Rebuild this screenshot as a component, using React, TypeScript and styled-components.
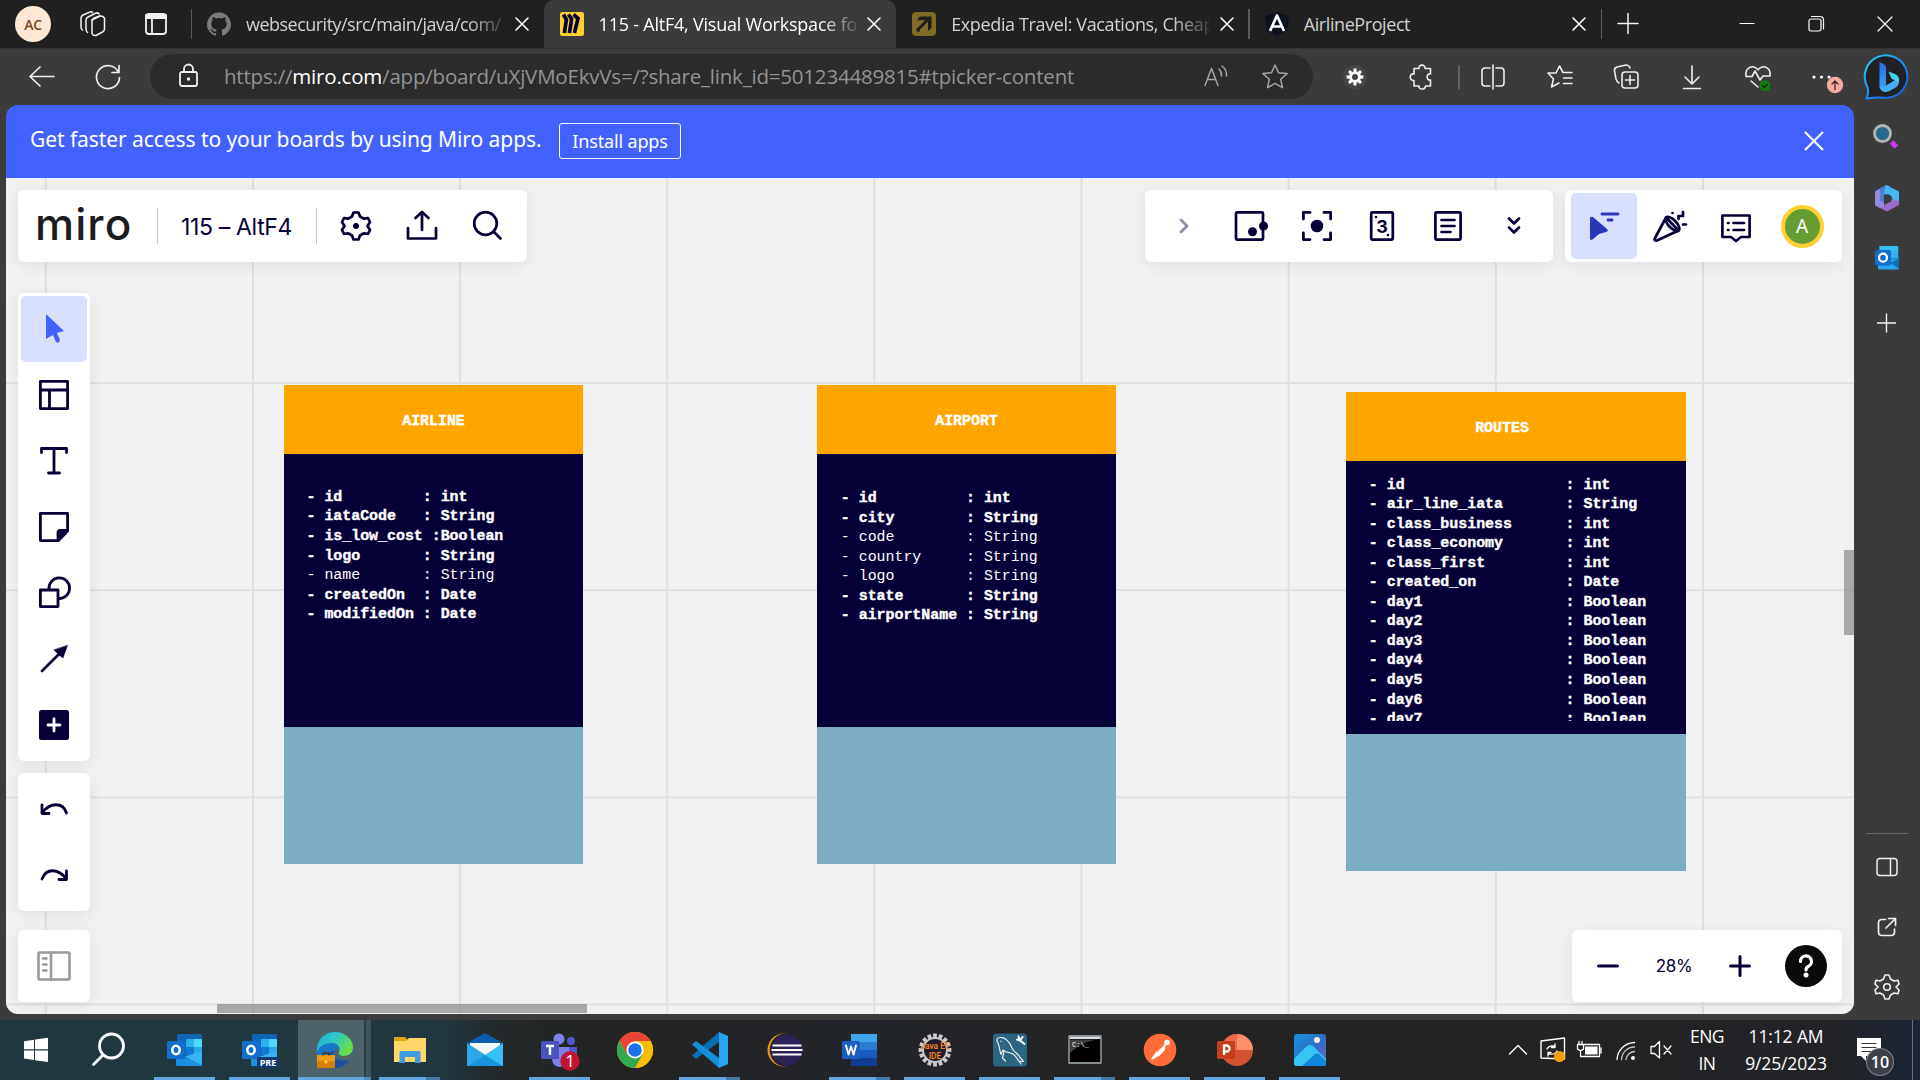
import React from "react";
import styled, { createGlobalStyle } from "styled-components";

const NAVY = "#050038";
const UI = '"Open Sans", "Noto Sans", sans-serif';

const GlobalStyle = createGlobalStyle`
  * { box-sizing: border-box; }
  body { margin: 0; background: #3b3b3b; font-family: ${UI}; overflow: hidden; }
`;

/* ---------- shared pieces ---------- */

const Svg = styled.svg<{ $size: number }>`
  display: block;
  flex: none;
  width: ${(p) => p.$size}px;
  height: ${(p) => p.$size}px;
  overflow: visible;
`;

/* Every icon is drawn around its own centre. */
function Icon({
  size = 36,
  color = "none",
  width = 1.5,
  children,
}: {
  size?: number;
  color?: string;
  width?: number;
  children: React.ReactNode;
}) {
  const h = size / 2;
  return (
    <Svg
      $size={size}
      viewBox={`${-h} ${-h} ${size} ${size}`}
      fill="none"
      stroke={color}
      strokeWidth={width}
      strokeLinecap="round"
      strokeLinejoin="round"
    >
      {children}
    </Svg>
  );
}

const Slot = styled.div<{ $w: number; $h?: number }>`
  flex: none;
  width: ${(p) => p.$w}px;
  height: ${(p) => (p.$h ? `${p.$h}px` : "100%")};
  display: flex;
  align-items: center;
  justify-content: center;
`;

function gearPath(teeth: number, outer: number, inner: number, a = 0.28, b = 0.5) {
  const step = (Math.PI * 2) / teeth;
  const pts: string[] = [];
  for (let i = 0; i < teeth; i++) {
    const c = i * step - Math.PI / 2;
    const at = (r: number, t: number) =>
      `${(Math.cos(c + t) * r).toFixed(2)} ${(Math.sin(c + t) * r).toFixed(2)}`;
    pts.push(at(inner, -step * b * 0.62), at(outer, -step * a * 0.6), at(outer, step * a * 0.6), at(inner, step * b * 0.62));
  }
  return `M${pts.join("L")}Z`;
}

/* ---------- browser frame ---------- */

const Screen = styled.div`
  width: 1920px;
  height: 1080px;
  display: grid;
  grid-template-columns: 1920px;
  grid-template-rows: 48px 57px 915px 60px;
  background: #3b3b3b;
  overflow: hidden;
`;

const TabStrip = styled.div`
  display: flex;
  align-items: center;
  background: #202020;
`;

const Profile = styled.div`
  width: 36px;
  height: 36px;
  border-radius: 50%;
  background: #fde9d6;
  color: #7a4a1c;
  font-size: 14px;
  font-weight: 600;
  letter-spacing: -0.4px;
  display: flex;
  align-items: center;
  justify-content: center;
`;

const Tab = styled.div<{ $active?: boolean }>`
  flex: none;
  width: 352.6px;
  height: 48px;
  display: flex;
  align-items: center;
  padding: 0 8px 0 16px;
  border-radius: 10px 10px 0 0;
  background: ${(p) => (p.$active ? "#3b3b3b" : "transparent")};
  color: ${(p) => (p.$active ? "#ffffff" : "#d2d2d2")};
`;

const TabTitle = styled.div<{ $ls?: number; $fade?: boolean; $bright?: boolean }>`
  flex: 1;
  min-width: 0;
  margin: 0 4px 1px 15px;
  overflow: hidden;
  white-space: nowrap;
  font-size: 18px;
  line-height: 26px;
  letter-spacing: ${(p) => p.$ls ?? 0}px;
  mask-image: ${(p) => (p.$fade ? "linear-gradient(90deg, #000 86%, rgba(0,0,0,.15) 100%)" : "none")};
`;

const Rule = styled.div<{ $h: number; $color: string; $m?: string }>`
  flex: none;
  width: 1.5px;
  height: ${(p) => p.$h}px;
  margin: ${(p) => p.$m ?? "0 -1px 0 -0.5px"};
  background: ${(p) => p.$color};
`;

const WindowButtons = styled.div`
  margin-left: auto;
  height: 100%;
  display: flex;
`;

const Toolbar = styled.div`
  display: flex;
  align-items: center;
  background: #3b3b3b;
  box-shadow: inset 0 1px 0 #333;
`;

const AddressBar = styled.div`
  flex: none;
  width: 1163px;
  height: 45px;
  border-radius: 23px;
  background: #2b2b2b;
  display: flex;
  align-items: center;
`;

const Url = styled.div`
  flex: 1;
  padding-bottom: 2px;
  color: #949494;
  font-size: 20.5px;
  letter-spacing: -0.2px;
  white-space: nowrap;
  b { color: #fff; font-weight: 400; }
`;

const Middle = styled.div`
  display: flex;
  padding: 0 0 6px 6px;
`;

const PageFrame = styled.main`
  width: 1848px;
  height: 909px;
  border-radius: 12px;
  overflow: hidden;
  display: flex;
  flex-direction: column;
`;

const SideRail = styled.aside`
  width: 66px;
  height: 915px;
  display: flex;
  flex-direction: column;
  align-items: center;
`;

const RailLine = styled.div`
  width: 42px;
  height: 1px;
  background: #6a6a6a;
`;

/* ---------- miro ---------- */

const Banner = styled.div`
  flex: none;
  height: 73px;
  display: flex;
  align-items: center;
  padding: 0 25px 1px 24px;
  background: #4262ff;
  color: #fff;
  font-family: "Noto Sans", sans-serif;
`;

const BannerText = styled.div`
  font-size: 21px;
  letter-spacing: -0.07px;
  white-space: nowrap;
  width: 529px;
  padding-bottom: 4px;
`;

const InstallButton = styled.button`
  width: 122px;
  height: 36px;
  padding: 0 0 1px;
  border: 1.5px solid #fff;
  border-radius: 3px;
  background: none;
  color: #fff;
  font: 18px "Noto Sans", sans-serif;
  letter-spacing: -0.15px;
`;

const BannerClose = styled.div`
  margin-left: auto;
  width: 29px;
`;

const Canvas = styled.div`
  flex: 1;
  position: relative;
  overflow: hidden;
  background-color: #f1f1f1;
  background-image: linear-gradient(90deg, #dfdfdf 1.5px, transparent 1.5px),
    linear-gradient(180deg, #dfdfdf 1.5px, transparent 1.5px);
  background-size: 207.15px 207.15px;
  background-position: 38.800px -3.100px;
`;

const Entity = styled.section<{ $x: number; $y: number; $w: number }>`
  position: absolute;
  left: ${(p) => p.$x}px;
  top: ${(p) => p.$y}px;
  width: ${(p) => p.$w}px;
  height: 479px;
  display: grid;
  grid-template-rows: 68.5px 273.5px 1fr;
  background: #7dadc3;
  color: #fff;
  font-family: "Liberation Mono", monospace;
  font-size: 14.92px;
  line-height: 19.55px;
`;

const EntityHead = styled.header<{ $shift?: number }>`
  background: #ffa500;
  text-align: center;
  font-weight: 700;
  -webkit-text-stroke: 0.4px #fff;
  padding: 27px ${(p) => p.$shift ?? 0}px 0 0;
`;

const EntityBody = styled.div<{ $top: number; $left: number }>`
  background: ${NAVY};
  padding: ${(p) => p.$top}px 0 13.5px ${(p) => p.$left}px;
  min-height: 0;
`;

const FieldList = styled.div`
  height: 100%;
  overflow: hidden;
`;

const Field = styled.div<{ $bold: boolean }>`
  white-space: pre;
  height: 19.55px;
  font-weight: ${(p) => (p.$bold ? 700 : 400)};
  -webkit-text-stroke: ${(p) => (p.$bold ? "0.4px #fff" : "0")};
`;

const Overlay = styled.div`
  position: absolute;
  inset: 0;
  padding: 12px;
  display: flex;
  flex-direction: column;
`;

const TopRow = styled.div`
  display: flex;
  gap: 12px;
  height: 72px;
`;

const Panel = styled.div<{ $w: number; $h?: number; $column?: boolean; $pad?: string }>`
  flex: none;
  width: ${(p) => p.$w}px;
  height: ${(p) => p.$h ?? 72}px;
  padding: ${(p) => p.$pad ?? "0"};
  display: flex;
  flex-direction: ${(p) => (p.$column ? "column" : "row")};
  align-items: center;
  border-radius: 6px;
  background: #fff;
  box-shadow: 0 4px 16px rgba(5, 0, 56, 0.07);
`;

const Spacer = styled.div`
  flex: 1;
`;

const Logo = styled.div`
  width: 122px;
  height: 72px;
  color: #1c1c1e;
  font: 500 44px/68px Inter, sans-serif;
  letter-spacing: 1.1px;
`;

const BoardName = styled.div`
  width: 158px;
  padding: 1px 0 0 23px;
  color: ${NAVY};
  font: 400 23px Inter, sans-serif;
  letter-spacing: -0.35px;
  white-space: nowrap;
`;

const ToolCell = styled.div<{ $active?: boolean; $w?: number }>`
  flex: none;
  width: ${(p) => p.$w ?? 66}px;
  height: 66px;
  display: flex;
  align-items: center;
  justify-content: center;
  border-radius: 5px;
  background: ${(p) => (p.$active ? "#d9dfff" : "transparent")};
`;

const Avatar = styled.div`
  width: 43px;
  height: 43px;
  border-radius: 50%;
  border: 4px solid #ffd02f;
  background: #659d33;
  color: #fff;
  font: 19px "Noto Sans", sans-serif;
  display: flex;
  align-items: center;
  justify-content: center;
`;

const LowerArea = styled.div`
  flex: 1;
  display: flex;
  justify-content: space-between;
  align-items: flex-end;
`;

const LeftDock = styled.div`
  display: flex;
  flex-direction: column;
`;

const DockGap = styled.div<{ $h: number }>`
  height: ${(p) => p.$h}px;
`;

const ZoomValue = styled.div`
  width: 66px;
  text-align: center;
  color: ${NAVY};
  font: 17px Inter, sans-serif;
  letter-spacing: -0.4px;
`;

const ScrollThumb = styled.div<{ $vertical?: boolean }>`
  position: absolute;
  background: rgba(120, 120, 120, 0.6);
  ${(p) =>
    p.$vertical
      ? "right: 0; top: 372px; width: 10px; height: 85px;"
      : "left: 211px; bottom: 1px; width: 370px; height: 9px;"}
`;

/* ---------- taskbar ---------- */

const Taskbar = styled.footer`
  display: flex;
  height: 60px;
  background: linear-gradient(90deg, #20373f 0, #20373f 440px, #232829 500px, #232323 620px, #22252a 860px, #232323 1100px, #222326 1830px, #1b2436 1920px);
`;

const TaskItem = styled.div<{ $bar?: "single" | "stack"; $active?: boolean }>`
  flex: none;
  width: 75.02px;
  height: 60px;
  padding: 0 6px;
  display: flex;
  flex-direction: column;
  align-items: center;
  justify-content: space-between;
  &::after {
    content: "";
    width: ${(p) => (p.$active ? 73 : 61)}px;
    height: 3px;
    background: ${(p) =>
      p.$active
        ? "linear-gradient(90deg,#64a5de 66px,#5288b4 66px)"
        : p.$bar === "stack"
        ? "linear-gradient(90deg,#64a5de 47px,#477aa5 47px)"
        : p.$bar
        ? "#64a5de"
        : "transparent"};
  }
  ${(p) =>
    p.$active &&
    "padding: 0 1px; background: linear-gradient(90deg, transparent 1.5px, #4d6269 1.5px, #4d6269 67px, #2a4048 67px, #2a4048 69px, #40545b 69px, #40545b 74px, transparent 74px);"}
`;

const TaskIcon = styled.div`
  height: 57px;
  padding-top: 3px;
  display: flex;
  align-items: center;
`;

const Tray = styled.div`
  margin-left: auto;
  display: flex;
  height: 60px;
  color: #fff;
`;

const TrayText = styled.div<{ $w: number; $ls?: number }>`
  width: ${(p) => p.$w}px;
  text-align: center;
  font-size: 17.5px;
  line-height: 27.5px;
  letter-spacing: ${(p) => p.$ls ?? 0}px;
  padding-top: 2.5px;
  white-space: nowrap;
`;

const ShowDesktop = styled.div`
  width: 8px;
  height: 60px;
  border-left: 1.5px solid #6c7078;
`;

/* ---------- icons ---------- */

const X = ({ r = 6, w = 1.6 }: { r?: number; w?: number }) => (
  <Icon size={28} color="#fff" width={w}>
    <path d={`M${-r} ${-r}L${r} ${r}M${r} ${-r}L${-r} ${r}`} />
  </Icon>
);

const GitHubMark = () => (
  <Icon size={24}>
    <path
      transform="translate(-12 -12)"
      fill="#7b7b7b"
      d="M12 .3a12 12 0 0 0-3.8 23.4c.6.1.8-.3.8-.6v-2c-3.3.7-4-1.6-4-1.6-.6-1.4-1.4-1.8-1.4-1.8-1-.7.1-.7.1-.7 1.2 0 1.9 1.2 1.9 1.2 1 1.8 2.8 1.3 3.5 1 0-.8.4-1.3.7-1.6-2.7-.3-5.5-1.3-5.5-6 0-1.2.5-2.3 1.3-3.1-.2-.4-.6-1.6 0-3.2 0 0 1-.3 3.4 1.2a11.5 11.5 0 0 1 6 0c2.3-1.5 3.3-1.2 3.3-1.2.6 1.6.2 2.8 0 3.2.9.8 1.3 1.9 1.3 3.2 0 4.6-2.8 5.6-5.5 5.9.5.4.9 1 .9 2.2v3.3c0 .3.1.7.8.6A12 12 0 0 0 12 .3"
    />
  </Icon>
);

const MiroMark = () => (
  <Icon size={24}>
    <rect x="-12" y="-12" width="24" height="24" rx="2.5" fill="#ffd02f" />
    <g stroke={NAVY} strokeWidth="3.7" strokeLinecap="butt" strokeLinejoin="miter">
      <path d="M-8.500 -9.500L-5.600 -4.500L-7.600 9" />
      <path d="M-3.500 -9.500L-.4 -5L-2.600 9" />
      <path d="M1.500 -9.500L6 -5.500L2.400 9" />
    </g>
  </Icon>
);

const ExpediaMark = () => (
  <Icon size={24}>
    <rect x="-12" y="-12" width="24" height="24" rx="4" fill="#7f6d26" />
    <path d="M-5.5 5L5 -5.5" stroke="#1d1d22" strokeWidth="3" />
    <path d="M-4 -7.5H7.5V4L4 7V-3.8H-7Z" fill="#1d1d22" />
    <path d="M-7.5 4h3.5v3.5h-3.500z" fill="#1d1d22" />
  </Icon>
);

const AngularMark = () => (
  <Icon size={24}>
    <path d="M0 -12L12 -8L10 7L0 12L-10 7L-12 -8Z" fill="#0b1220" />
    <path d="M-7 7L0 -8.500L7 7M-3.800 2.500H3.800" stroke="#fff" strokeWidth="2.700" strokeLinecap="butt" />
  </Icon>
);

const BingMark = () => (
  <Icon size={48}>
    <defs>
      <linearGradient id="bingRing" x1="0" y1="0" x2="1" y2="1">
        <stop offset="0" stopColor="#27d3f5" />
        <stop offset=".6" stopColor="#1d86f0" />
        <stop offset="1" stopColor="#1b52e0" />
      </linearGradient>
      <linearGradient id="bingStem" x1="0" y1="0" x2="0" y2="1">
        <stop offset="0" stopColor="#2f62e8" />
        <stop offset="1" stopColor="#37a7fa" />
      </linearGradient>
    </defs>
    <path
      d="M-20.500 21.500C-18.500 17 -18.500 14 -19.500 10A21.300 21.300 0 1 1 .5 20.800C-6 20.500 -12 20 -20.500 21.500Z"
      fill="#202124"
      stroke="url(#bingRing)"
      strokeWidth="2"
    />
    <path d="M-7.500 -15L-2.500 -12.500Q-1 -11.500 -1 -10V8L-4.500 12.500L-7.500 9Z" fill="url(#bingStem)" />
    <path d="M-7.500 8C-7 11 -3 10 -1 8.500L11.500 1C13 5 11.500 9 8 11L2 14.300C-3 16.500 -8 13.500 -7.500 8Z" fill="#45aefa" />
    <path d="M1.500 -5.500L8 -3C11.500 -1.500 12.500 2 12 5L7 3L4.500 1.500Z" fill="#41d6ea" />
  </Icon>
);

const OutlookMark = ({ pre }: { pre?: boolean }) => (
  <Icon size={36}>
    <rect x="-8" y="-16" width="25" height="26" rx="1.500" fill="#1066b5" />
    <path d="M1 -11H9V-3H1Z" fill="#2eb0ee" />
    <path d="M9 -11H17V-3H9Z" fill="#50d9ff" />
    <path d="M1 -3H9V5H1Z" fill="#0f78d4" />
    <path d="M9 -3H17V5H9Z" fill="#28a8ea" />
    <path d="M-9 2L4 9L17 1V14.500Q17 16 15.500 16H-7.500Q-9 16 -9 14.500Z" fill="#1b8fe0" />
    <path d="M17 1V15L0 6.500Z" fill="#36b3f3" />
    <rect x="-18" y="-9" width="18" height="18" rx="1.500" fill="#0f6fcb" />
    <ellipse cx="-9" cy="0" rx="3.700" ry="4.200" stroke="#fff" strokeWidth="2.500" />
    {pre && (
      <>
        <rect x="-3" y="7" width="22" height="11" rx="1" fill="#123b6d" />
        <text x="8" y="15.800" fill="#fff" fontSize="9" fontWeight="700" textAnchor="middle" fontFamily="Open Sans">
          PRE
        </text>
      </>
    )}
  </Icon>
);

const RailOutlook = () => (
  <Icon size={26}>
    <rect x="-7.500" y="-12" width="19" height="20" rx="1.200" fill="#1b86cf" />
    <path d="M-7.500 -12H11V-7H-7.500Z" fill="#37bdf0" />
    <path d="M3 -7H11V0H3Z" fill="#35b0ec" />
    <path d="M-9 6L3 2L12 0V10.500Q12 11.500 11 11.500H-8Q-9 11.500 -9 10.500Z" fill="#28a8ea" />
    <path d="M12 0V11L3 5Z" fill="#1272b5" />
    <rect x="-12" y="-8" width="16" height="15.500" rx="1.500" fill="#0f6fcb" />
    <circle cx="-4" cy="-.300" r="4" stroke="#fff" strokeWidth="2.200" />
  </Icon>
);

const EdgeMark = () => (
  <Icon size={38}>
    <defs>
      <linearGradient id="edgeTop" x1="0" y1="0" x2="1" y2=".5">
        <stop offset="0" stopColor="#22a7e0" />
        <stop offset=".5" stopColor="#2fc8c8" />
        <stop offset="1" stopColor="#6ae044" />
      </linearGradient>
    </defs>
    <circle r="18" fill="#1479c8" />
    <path d="M-18 -2C-17 -12 -9 -18 0 -18C11 -18 18 -10 18 -3C18 3 14 6 9 6C5 6 3 4 4 2C6 -2 3 -7 -3 -7C-10 -7 -16 -4 -18 2Z" fill="url(#edgeTop)" />
    <path d="M-1 0C-3 8 4 13 15 9C12 15 6 18 0 18C-6 17 -9 9 -6 3Z" fill="#1b4f9c" />
    <path d="M4 2C2.500 4 4.500 6 9 6Q14 6 17.500 2.500L18.500 8L15 10C6 12 0 8 -1 2C0 -2 4 -3 4 2Z" fill="#4f636b" />
    <rect x="-18" y="5" width="18" height="13" rx="1" fill="#d57f08" />
    <rect x="-18" y="5" width="18" height="6" fill="#f09c12" />
    <path d="M-12 5V3H-6V5" stroke="#5c3200" strokeWidth="1.500" />
    <circle cx="-9" cy="12" r="1.500" fill="#ffe04b" />
  </Icon>
);

const FolderMark = () => (
  <Icon size={36}>
    <path d="M-16 -13H-5L-2 -10H16V12H-16Z" fill="#e0a30c" />
    <path d="M-16 -9H-4L-1 -12H16V12H-16Z" fill="#ffd768" />
    <path d="M-10.500 13V3Q-10.500 1 -8.500 1H8.500Q10.500 1 10.500 3V13H5V7H-5V13Z" fill="#3f9ce0" />
  </Icon>
);

const MailMark = () => (
  <Icon size={38}>
    <path d="M-18 -7L0 -17L18 -7V4H-18Z" fill="#0a5eb0" />
    <path d="M-15 -7H15V4L0 10L-15 4Z" fill="#f2f4f8" />
    <path d="M-18 -7L2 6L18 16H-18Z" fill="#2ea6e8" />
    <path d="M18 -7V16H14L-18 16L0 5Z" fill="#35c1f5" />
    <path d="M-18 16L0 5L18 16Z" fill="#1c93dd" />
  </Icon>
);

const TeamsMark = () => (
  <Icon size={40}>
    <circle cx="-1" cy="-11" r="5.500" fill="#7b83eb" />
    <circle cx="11" cy="-9" r="4" fill="#5059c9" />
    <path d="M4 -3H17V6Q16 12 9 12H4Z" fill="#5059c9" />
    <path d="M-8 -3H9V8Q7 17 -1 17Q-8 16 -8 8Z" fill="#7b83eb" />
    <rect x="-19" y="-9" width="18" height="18" rx="1.500" fill="#4b53bc" />
    <path d="M-14 -4H-6M-10 -4V5" stroke="#fff" strokeWidth="2.400" strokeLinecap="butt" />
    <circle cx="10" cy="11" r="9.700" fill="#c4122f" />
    <text x="10" y="17" fill="#fff" fontSize="17" textAnchor="middle" fontFamily="Open Sans">
      1
    </text>
  </Icon>
);

const ChromeMark = () => (
  <Icon size={36}>
    <circle r="18" fill="#fbbc05" />
    <path d="M-15.600 -9A18 18 0 0 1 15.600 -9H0L-7.800 4.500Z" fill="#ea4335" />
    <path d="M-15.600 -9A18 18 0 0 0 0 18L7.800 4.500H-7.800Z" fill="#34a853" />
    <path d="M15.600 -9A18 18 0 0 1 0 18L7.800 4.500L0 -9Z" fill="#fbbc05" />
    <circle r="8.500" fill="#fff" />
    <circle r="6.800" fill="#1a73e8" />
  </Icon>
);

const CodeMark = () => (
  <Icon size={36}>
    <path d="M-18 5.500L-14 9L9 -8V-18L-18 5.500Z" fill="#0a6fb2" />
    <path d="M-18 -5.500L-14 -9L9 8V18L-18 -5.500Z" fill="#1590d8" />
    <path d="M9 -18L18 -14V14L9 18Z" fill="#27a5f2" />
  </Icon>
);

const EclipseMark = () => (
  <Icon size={36}>
    <circle cx="-1" r="16.500" fill="#f7941e" />
    <circle cx="1.500" r="16.800" fill="#222" />
    <circle cx="2" r="15.700" fill="#2c2255" />
    <path d="M-12.500 -4.500H16.500M-13.500 0H17.500M-12.500 4.500H16.500" stroke="#fff" strokeWidth="2" strokeLinecap="butt" />
  </Icon>
);

const WordMark = () => (
  <Icon size={36}>
    <path d="M-9 -16H17V-8H-9Z" fill="#41a5ee" />
    <path d="M-9 -8H17V0H-9Z" fill="#2b7cd3" />
    <path d="M-9 0H17V8H-9Z" fill="#185abd" />
    <path d="M-9 8H17V16H-9Z" fill="#103f91" />
    <rect x="-18" y="-9" width="18" height="18" rx="1.500" fill="#1d5ec4" />
    <path d="M-14 -4.500L-11.500 4.500L-9 -3.500L-6.500 4.500L-4 -4.500" stroke="#fff" strokeWidth="1.900" />
  </Icon>
);

const JavaMark = () => (
  <Icon size={36}>
    <path d={gearPath(16, 16.500, 12.800, 0.5, 0.6)} fill="#c9c9cb" />
    <circle r="11" fill="#231c2b" />
    <g fill="#f08726" fontSize="8.400" fontWeight="600" textAnchor="middle" fontFamily="Roboto" letterSpacing="0">
      <text y="-1.500">Java EE</text>
      <text y="8.500">IDE</text>
    </g>
  </Icon>
);

const MySqlMark = () => (
  <Icon size={36}>
    <rect x="-17" y="-16.500" width="34" height="33" rx="3.500" fill="#2a6584" />
    <g stroke="#eaf2f6" strokeWidth="1.200">
      <path d="M-9 4C-11 0 -10 -3 -12 -7C-14 -10 -13 -12.500 -10 -12.500C-5 -13 0 -8 2.500 -1C5 3 9 4 10.500 8L13.500 11.500H9.500L11 14" />
      <path d="M-9 4L-7 0C-4 3 0 2 3 4C6 6 7 9 9.500 11.500" />
      <path d="M-6 1.500L-7.500 8L-4.500 11" />
      <path d="M-9 -9V-8.500" />
    </g>
    <path d="M8.500 -13.500L10 -9.500L14.500 -6M7 -10.500L10 -9.500L12.500 -13" stroke="#fff" strokeWidth="2" />
  </Icon>
);

const CmdMark = () => (
  <Icon size={36}>
    <rect x="-16" y="-14" width="32" height="27" fill="#000" stroke="#a9b2b8" strokeWidth="1.300" />
    <path d="M-15.300 -13.300H15.300V-11H-15.300Z" fill="#d9dde2" />
    <path d="M-15 -10.500H15C0 -10 -8 -3 -15 3Z" fill="#3f3f3f" />
    <text x="-13" y="-3.500" fill="#fff" fontSize="7" fontFamily="Liberation Mono">
      C:\_
    </text>
  </Icon>
);

const PostmanMark = () => (
  <Icon size={36}>
    <circle r="16.300" fill="#ff6c37" />
    <circle cx="7" cy="-7.500" r="2.800" fill="#fff" />
    <path d="M5 -5L-3 2L-8 9L-1 5L4 0Z" fill="#fff" stroke="#fff" strokeWidth="1.500" />
    <path d="M-3 2L3 -4" stroke="#ff6c37" strokeWidth=".8" />
  </Icon>
);

const PptMark = () => (
  <Icon size={36}>
    <circle cx="2" r="16" fill="#d35230" />
    <path d="M2 -16A16 16 0 0 1 18 0H2Z" fill="#ff8f6b" />
    <path d="M2 -16A16 16 0 0 0 -14 0H2Z" fill="#ed6c47" />
    <rect x="-18" y="-9" width="18" height="18" rx="1.500" fill="#c43e1c" />
    <path d="M-11 5V-4.500H-8.500A3 3 0 0 1 -8.500 1.500H-11" stroke="#fff" strokeWidth="2.300" strokeLinecap="butt" />
  </Icon>
);

const PhotosMark = () => (
  <Icon size={36}>
    <defs>
      <linearGradient id="photoBg" x1="0" y1="0" x2="1" y2="1">
        <stop offset="0" stopColor="#1592e0" />
        <stop offset=".55" stopColor="#2f6fc4" />
        <stop offset="1" stopColor="#7d5fc0" />
      </linearGradient>
    </defs>
    <rect x="-16" y="-16" width="32" height="32" rx="3" fill="url(#photoBg)" />
    <path d="M-16 9L-3 -4Q0 -6 3 -4L16 9V13Q16 16 13 16H-13Q-16 16 -16 13Z" fill="#35c5f2" />
    <path d="M-8 16L5 4Q7 3 9 4L16 11V13Q16 16 13 16Z" fill="#0f86d8" />
    <circle cx="7" cy="-10" r="3" fill="#f4e8e2" />
  </Icon>
);

const SidePanelGlyph = () => (
  <Icon color="#eee">
    <rect x="-10" y="-8.500" width="20" height="17" rx="3" />
    <path d="M3.500 -8.500V8.500" />
  </Icon>
);

/* ---------- data ---------- */

type Row = [string, string, boolean];

const pad = (s: string, n: number) => s + " ".repeat(Math.max(0, n - s.length));

const airline: Row[] = [
  ["- id         : ", "int", true],
  ["- iataCode   : ", "String", true],
  ["- is_low_cost :", "Boolean", true],
  ["- logo       : ", "String", true],
  ["- name       : ", "String", false],
  ["- createdOn  : ", "Date", true],
  ["- modifiedOn : ", "Date", true],
];

const airport: Row[] = (
  [
    ["id", "int", true],
    ["city", "String", true],
    ["code", "String", false],
    ["country", "String", false],
    ["logo", "String", false],
    ["state", "String", true],
    ["airportName", "String", true],
  ] as Row[]
).map(([n, t, b]) => [pad(`- ${n}`, 14) + ": ", t, b]);

const routes: Row[] = (
  [
    ["id", "int"],
    ["air_line_iata", "String"],
    ["class_business", "int"],
    ["class_economy", "int"],
    ["class_first", "int"],
    ["created_on", "Date"],
    ["day1", "Boolean"],
    ["day2", "Boolean"],
    ["day3", "Boolean"],
    ["day4", "Boolean"],
    ["day5", "Boolean"],
    ["day6", "Boolean"],
    ["day7", "Boolean"],
  ] as [string, string][]
).map(([n, t]) => [pad(`- ${n}`, 22) + ": ", t, true]);

function EntityCard(props: {
  title: string;
  rows: Row[];
  x: number;
  y: number;
  w: number;
  top: number;
  left: number;
  shift?: number;
}) {
  return (
    <Entity $x={props.x} $y={props.y} $w={props.w}>
      <EntityHead $shift={props.shift}>{props.title}</EntityHead>
      <EntityBody $top={props.top} $left={props.left}>
        <FieldList>
          {props.rows.map(([a, b, bold]) => (
            <Field key={a} $bold={bold}>
              {a + b}
            </Field>
          ))}
        </FieldList>
      </EntityBody>
      <div />
    </Entity>
  );
}

/* ---------- sections ---------- */

const Tabs = () => (
  <TabStrip>
    <Slot $w={66}>
      <Profile>AC</Profile>
    </Slot>
    <Slot $w={54}>
      <Icon color="#f2f2f2">
        <path d="M-1 -4L7 -8Q9.500 -8.500 11.500 -6V5Q11.500 7 9.500 8L3 11.500Q0 12 -1 9.500Z" />
        <path d="M-1 -4Q-.5 -5 1 -6L7 -8" />
        <path d="M-5.500 8.500Q-7 7.500 -7 5V-4Q-7 -6 -5 -7L3 -11Q5 -11.500 6 -10M-10.500 6Q-12 5 -12 3V-6Q-12 -8 -10 -9L-3 -12Q-1.500 -12.500 -.5 -11.500" />
      </Icon>
    </Slot>
    <Slot $w={71}>
      <Icon color="#f2f2f2" width={1.8}>
        <rect x="-10" y="-10" width="20" height="20" rx="3" />
        <path d="M-10 -9H10V-6H-10Z" fill="#f2f2f2" />
        <path d="M-4 -5V10" />
      </Icon>
    </Slot>
    <Rule $h={30} $color="#5c5c5c" />
    <Tab>
      <GitHubMark />
      <TabTitle $fade $ls={-0.52}>websecurity/src/main/java/com/</TabTitle>
      <X />
    </Tab>
    <Tab $active>
      <MiroMark />
      <TabTitle $fade $ls={-0.22}>115 - AltF4, Visual Workspace for</TabTitle>
      <X />
    </Tab>
    <Tab>
      <ExpediaMark />
      <TabTitle $fade $ls={-0.37}>Expedia Travel: Vacations, Cheap</TabTitle>
      <X />
    </Tab>
    <Rule $h={30} $color="#5c5c5c" />
    <Tab>
      <AngularMark />
      <TabTitle $ls={-0.42}>AirlineProject</TabTitle>
      <X />
    </Tab>
    <Rule $h={30} $color="#5c5c5c" />
    <Slot $w={54}>
      <Icon color="#f2f2f2">
        <path d="M-10 -.5H10M0 -10.500V9.500" />
      </Icon>
    </Slot>
    <WindowButtons>
      <Slot $w={68}>
        <Icon color="#fff" width={1.2}>
          <path d="M-7 -.5H7" />
        </Icon>
      </Slot>
      <Slot $w={69}>
        <Icon color="#fff" width={1.2}>
          <rect x="-7" y="-5" width="12" height="12" rx="2" />
          <path d="M-4.500 -7.500H4Q7.500 -7.500 7.500 -4V5" />
        </Icon>
      </Slot>
      <Slot $w={70}>
        <X r={7} w={1.2} />
      </Slot>
    </WindowButtons>
  </TabStrip>
);

const BrowserBar = () => (
  <Toolbar>
    <Slot $w={84}>
      <Icon color="#eee" width={1.7}>
        <path d="M12 -.5H-12M-2 -10L-12 -.5L-2 9" />
      </Icon>
    </Slot>
    <Slot $w={48}>
      <Icon color="#eee" width={1.7}>
        <path d="M10.300 -5A11.500 11.500 0 1 0 11.500 .5M11 -11.500V-4.500H4" />
      </Icon>
    </Slot>
    <Slot $w={18} />
    <AddressBar>
      <Slot $w={74}>
        <Icon color="#eee" width={1.8}>
          <rect x="-7" y="-5" width="17" height="14" rx="2" />
          <path d="M-3 -5V-8A4.500 4.500 0 0 1 6 -8V-5" />
          <circle cx="1.500" cy="2" r=".8" fill="#eee" />
        </Icon>
      </Slot>
      <Url>
        https://<b>miro.com</b>/app/board/uXjVMoEkvVs=/?share_link_id=501234489815#tpicker-content
      </Url>
      <Slot $w={42}>
        <Icon color="#a5a5a5" width={1.5}>
          <path d="M-11 8.500L-4.500 -8.500L2 8.500M-8.700 2.500H-.3M3 -8Q6 -5 5.500 -1M6 -11Q11 -7 10.500 -1" />
        </Icon>
      </Slot>
      <Slot $w={76}>
        <Icon color="#a5a5a5" width={1.5}>
          <path d="M0 -12L3.500 -4.200L12 -3.400L5.700 2.300L7.500 10.700L0 6.400L-7.500 10.700L-5.700 2.300L-12 -3.400L-3.500 -4.200Z" />
        </Icon>
      </Slot>
    </AddressBar>
    <Slot $w={9} />
    <Slot $w={66}>
      <Icon>
        <circle r="12" fill="#464646" />
        <path d={gearPath(8, 8.500, 5.800, 0.35, 0.6)} fill="#fff" />
        <circle r="3" fill="#464646" />
      </Icon>
    </Slot>
    <Slot $w={68}>
      <Icon color="#eee" width={1.6}>
        <path d="M-8 -8.500H-3C-4 -13 4 -13 3 -8.500H8.500V-3C4 -4 4 4 8.500 3V9H3.500C4 13 -4 13 -3 9H-8V3.500C-13 4 -13 -4 -8 -3Z" />
      </Icon>
    </Slot>
    <Rule $h={24} $color="#626262" $m="0 0 0 2px" />
    <Slot $w={67}>
      <Icon color="#eee" width={1.6}>
        <path d="M-3 -9H-8Q-11 -9 -11 -6V6Q-11 9 -8 9H-3M3 -9H8Q11 -9 11 -6V6Q11 9 8 9H3M0 -12V12" />
      </Icon>
    </Slot>
    <Slot $w={66}>
      <Icon color="#eee" width={1.6}>
        <path d="M3 -4.500L-.5 -11L-4 -4H-12L-6.500 2L-8.500 10L-1 6M3.500 -4.500H12M3.500 1H12M3.500 6.500H12" />
      </Icon>
    </Slot>
    <Slot $w={66}>
      <Icon color="#eee" width={1.6}>
        <rect x="-4" y="-5" width="16" height="16" rx="3" />
        <path d="M4 -1.500V7.500M-.5 3H8.500M-7 6Q-9 5 -10 2L-11.500 -6Q-12 -9 -9 -10L0 -12Q3 -12 4 -9" />
      </Icon>
    </Slot>
    <Slot $w={66}>
      <Icon color="#eee" width={1.6}>
        <path d="M0 -11V6M-7 0L0 7L7 0M-8.500 11.500H8.500" />
      </Icon>
    </Slot>
    <Slot $w={66}>
      <Icon color="#eee" width={1.6}>
        <path d="M-12 -1C-13 -8 -8 -11 -4 -10Q-1 -9 0 -7Q1 -9 4 -10C8 -11 13 -8 12 -1M-12 -.5H-6L-3 -6L2 3L5 -1H12M-7 4L0 10" />
        <circle cx="7" cy="8.500" r="5.500" fill="#107c10" stroke="none" />
        <path d="M4.500 8.500L6.500 10.500L9.500 7" strokeWidth="1.200" stroke="#0a2a0a" />
      </Icon>
    </Slot>
    <Slot $w={63.5}>
      <Icon>
        <g fill="#fff">
          <circle cx="-8" cy="0" r="1.600" />
          <circle cx="-.5" cy="0" r="1.600" />
          <circle cx="7" cy="0" r="1.600" />
        </g>
        <circle cx="13" cy="8" r="8.200" fill="#f4aba3" />
        <path d="M13 12.500V4M10 7L13 4L16 7" stroke="#402020" strokeWidth="1.300" />
      </Icon>
    </Slot>
    <Slot $w={65}>
      <BingMark />
    </Slot>
  </Toolbar>
);

const LeftTools = () => (
  <LeftDock>
    <Panel $w={72} $h={468} $column $pad="3px 0">
      <ToolCell $active>
        <Icon>
          <path d="M-8 -15L10 2L3 4L6 11Q5 15 2 13L-1 6L-8 10Z" fill="#4262ff" />
        </Icon>
      </ToolCell>
      <ToolCell>
        <Icon color={NAVY} width={2.8}>
          <path d="M-13.600 -13.600H13.600V13.600H-13.600ZM-13.600 -5H13.600M-4.500 -5V13.600" />
        </Icon>
      </ToolCell>
      <ToolCell>
        <Icon color={NAVY} width={2.8}>
          <path d="M-12.500 -8.500V-12.500H12.500V-8.500M0 -12.500V12M-5.500 12H5.500" />
        </Icon>
      </ToolCell>
      <ToolCell>
        <Icon color={NAVY} width={2.8}>
          <path d="M-13.600 -13.600H13.600V4L4.500 13.600H-13.600Z" />
          <path d="M4 13V6Q4 3.500 6 3.500H13Z" fill={NAVY} />
        </Icon>
      </ToolCell>
      <ToolCell>
        <Icon color={NAVY} width={2.8}>
          <path d="M-13.600 -3H4V13.600H-13.600Z" />
          <path d="M-5 -4A10.300 10.300 0 1 1 5 5.500" />
        </Icon>
      </ToolCell>
      <ToolCell>
        <Icon color={NAVY} width={2.800}>
          <path d="M-12 12L5 -5" />
          <path d="M13.500 -13.500L9 -1L5.500 -3.500L3.500 -5.500L0 -9Z" fill={NAVY} strokeWidth=".5" />
        </Icon>
      </ToolCell>
      <ToolCell>
        <Icon>
          <rect x="-15" y="-15" width="30" height="30" rx="2.500" fill={NAVY} />
          <path d="M-6 0H6M0 -6V6" stroke="#fff" strokeWidth="2.800" />
        </Icon>
      </ToolCell>
    </Panel>
    <DockGap $h={12} />
    <Panel $w={72} $h={138} $column $pad="3px 0">
      <ToolCell>
        <Icon color={NAVY} width={2.800}>
          <path d="M-12 -4V4.500H-5M-12 4C-4 -7 9 -7 12.500 4" />
        </Icon>
      </ToolCell>
      <ToolCell>
        <Icon color={NAVY} width={2.800}>
          <path d="M12.500 -4V4.500H5M12.500 4C4 -7 -8 -7 -12 4" />
        </Icon>
      </ToolCell>
    </Panel>
    <DockGap $h={19} />
    <Panel $w={72} $pad="0 3px">
      <ToolCell>
        <Icon color="#999" width={2.600}>
          <rect x="-15.500" y="-13.500" width="31" height="27" rx="1" />
          <path d="M-3 -13.500V13.500M-11 -7.500H-7.500M-11 -1.500H-7.500M-11 4.500H-7.500" />
        </Icon>
      </ToolCell>
    </Panel>
  </LeftDock>
);

const Board = () => (
  <Canvas>
    <EntityCard title="AIRLINE" rows={airline} x={278} y={207} w={299} top={34.400} left={22.500} />
    <EntityCard title="AIRPORT" rows={airport} x={811.3} y={207.3} w={298.500} top={35.200} left={23.500} />
    <EntityCard title="ROUTES" rows={routes} x={1340} y={214} w={340} top={15} left={22.800} shift={28} />
    <ScrollThumb />
    <ScrollThumb $vertical />
    <Overlay>
      <TopRow>
        <Panel $w={509} $pad="0 0 0 17px">
          <Logo>miro</Logo>
          <Rule $h={36} $color="#c8c6d6" $m="0" />
          <BoardName>115 – AltF4</BoardName>
          <Rule $h={36} $color="#c8c6d6" $m="0" />
          <ToolCell $w={78}>
            <Icon color={NAVY} width={2.700}>
              <path d="M-2.500 -13.500H2.500L4 -9.500L8 -7.300L12 -8L14 -4L11.500 0L14 4L12 8L8 7.300L4 9.500L2.500 13.500H-2.500L-4 9.500L-8 7.300L-12 8L-14 4L-11.500 0L-14 -4L-12 -8L-8 -7.300L-4 -9.500Z" />
              <circle r="3" fill={NAVY} stroke="none" />
            </Icon>
          </ToolCell>
          <ToolCell $w={54}>
            <Icon color={NAVY} width={2.700}>
              <path d="M-14 2V12.500H14V2M0 4V-13.500M-6.500 -8L0 -14L6.500 -8" />
            </Icon>
          </ToolCell>
          <ToolCell $w={78}>
            <Icon color={NAVY} width={2.700}>
              <circle cx="-2.500" cy="-2.500" r="11.300" />
              <path d="M6 6L12.500 12.500" />
            </Icon>
          </ToolCell>
        </Panel>
        <Spacer />
        <Panel $w={408} $pad="0 6px">
          <ToolCell>
            <Icon color="#8f8ca6" width={2.800}>
              <path d="M-3 -6L3 0L-3 6" />
            </Icon>
          </ToolCell>
          <ToolCell $w={68}>
            <Icon color={NAVY} width={2.700}>
              <rect x="-15" y="-13.600" width="27" height="27.200" rx="1" />
              <circle cx="1.500" cy="5.800" r="4.500" fill={NAVY} stroke="none" />
              <circle cx="12.500" cy="0" r="4.500" fill={NAVY} stroke="none" />
            </Icon>
          </ToolCell>
          <ToolCell $w={63}>
            <Icon color={NAVY} width={2.800}>
              <path d="M-13.600 -7V-13.600H-7M7 -13.600H13.600V-7M13.600 7V13.600H7M-7 13.600H-13.600V7" />
              <circle r="6.300" fill={NAVY} stroke="none" />
            </Icon>
          </ToolCell>
          <ToolCell $w={67}>
            <Icon color={NAVY} width={2.700}>
              <rect x="-10.800" y="-13.600" width="21.600" height="27.200" rx="1" />
              <circle cx="-6" cy="-9" r="1.300" fill={NAVY} stroke="none" />
              <circle cx="6" cy="9" r="1.300" fill={NAVY} stroke="none" />
              <text y="6.500" fill={NAVY} stroke="none" fontSize="18" fontWeight="700" textAnchor="middle" fontFamily="Inter">
                3
              </text>
            </Icon>
          </ToolCell>
          <ToolCell>
            <Icon color={NAVY} width={2.700}>
              <rect x="-12.600" y="-13.600" width="25.200" height="27.200" rx="1" />
              <path d="M-6.500 -6H6.500M-6.500 0H6.500M-6.500 6H2.500" />
            </Icon>
          </ToolCell>
          <ToolCell>
            <Icon color={NAVY} width={2.700}>
              <path d="M-5 -7.500L0 -2.500L5 -7.500M-5 1.500L0 6.500L5 1.500" />
            </Icon>
          </ToolCell>
        </Panel>
        <Panel $w={277} $pad="0 6px">
          <ToolCell $active>
            <Icon>
              <path d="M-14 -8V13Q-13 15 -11 13L-5 8L2 6Q5 5 3 3L-11 -9Q-13 -10 -14 -8Z" fill="#2a37b8" />
              <path d="M-2 -12H14M4 -6H8" stroke="#2a37b8" strokeWidth="2.800" />
            </Icon>
          </ToolCell>
          <ToolCell>
            <Icon color={NAVY} width={2.700}>
              <path d="M-4 -8.500L-15.500 13Q-15.500 15 -13 14.500L8.500 4.500Z" />
              <ellipse cx="2.500" cy="-2" rx="9" ry="4" transform="rotate(46 2.500 -2)" />
              <path d="M2.500 -13H2.600M8.500 -7V-10H13V-14M13 -1.500H16" />
            </Icon>
          </ToolCell>
          <ToolCell>
            <Icon color={NAVY} width={2.700}>
              <path d="M-13.600 -10.500H13.600V11H5L0 15L-5 11H-13.600Z" />
              <path d="M-8 -3H-7.500M-2.500 -3H8M-8 4H-7.500M-2.500 4H8" />
            </Icon>
          </ToolCell>
          <ToolCell>
            <Avatar>A</Avatar>
          </ToolCell>
        </Panel>
      </TopRow>
      <LowerArea>
        <LeftTools />
        <Panel $w={270} $pad="0 3px">
          <ToolCell>
            <Icon color={NAVY} width={3}>
              <path d="M-9.500 0H9.500" />
            </Icon>
          </ToolCell>
          <ZoomValue>28%</ZoomValue>
          <ToolCell>
            <Icon color={NAVY} width={3}>
              <path d="M-9.500 0H9.500M0 -9.500V9.500" />
            </Icon>
          </ToolCell>
          <ToolCell>
            <Icon size={42}>
              <circle r="21" fill="#0a0a0a" />
              <path d="M-5.500 -4.500A5.500 5.500 0 1 1 2.500 .3Q0 1.500 0 4" stroke="#fff" strokeWidth="3.200" />
              <circle cy="9" r="2.500" fill="#fff" />
            </Icon>
          </ToolCell>
        </Panel>
      </LowerArea>
    </Overlay>
  </Canvas>
);

const Rail = () => (
  <SideRail>
    <Slot $w={66} $h={63}>
      <Icon>
        <path d="M4.500 5L9.500 10" stroke="#c63df2" strokeWidth="5" strokeLinecap="butt" />
        <circle cx="-4.500" cy="-3.500" r="8" fill="#236a8c" stroke="#b5b5b5" strokeWidth="2.800" />
      </Icon>
    </Slot>
    <Slot $w={66} $h={60}>
      <Icon>
        <path d="M-1 -13L3 -12V-4L-3 -3L-3 8L-7 10L-12 7V-7Z" fill="#4d7fdc" />
        <path d="M-1 -13L12 -6.500V5L5 1V-1L-3 -5Z" fill="#45b9ee" />
        <path d="M12 3V7L0 13.500L-8 9.500L4 3.500L5 1Z" fill="#9b6bcd" />
        <path d="M-12 3V-6L-7 -9V3L-3 5V9L-7 10L-12 7Z" fill="#9a8bdf" />
        <circle cx=".5" cy="0" r="3.800" fill="#3b3b3b" />
      </Icon>
    </Slot>
    <Slot $w={66} $h={60}>
      <RailOutlook />
    </Slot>
    <Slot $w={66} $h={70}>
      <Icon color="#f5f5f5" width={1.4}>
        <path d="M-9.500 0H8.500M-.5 -9V9" />
      </Icon>
    </Slot>
    <Spacer />
    <RailLine />
    <Slot $w={66} $h={66}>
      <SidePanelGlyph />
    </Slot>
    <Slot $w={66} $h={54}>
      <Icon color="#eee" width={1.700}>
        <path d="M-1.500 -7.500H-5Q-8.500 -7.500 -8.500 -4V5Q-8.500 8.500 -5 8.500H4Q7.500 8.500 7.500 5V2M1.500 -8.500H8.500V-1.500M8.500 -8.500L-1 1" />
      </Icon>
    </Slot>
    <Slot $w={66} $h={66}>
      <Icon color="#eee" width={1.600}>
        <path d="M-2 -12H2L3.500 -8L7 -6L11 -6.800L12 -3L9 0L12 3L11 6.800L7 6L3.500 8L2 12H-2L-3.500 8L-7 6L-11 6.800L-12 3L-9 0L-12 -3L-11 -6.800L-7 -6L-3.500 -8Z" />
        <circle r="3.300" />
      </Icon>
    </Slot>
  </SideRail>
);

const tasks: { icon: React.ReactNode; bar?: "single" | "stack"; active?: boolean }[] = [
  { icon: <OutlookMark />, bar: "single" },
  { icon: <OutlookMark pre />, bar: "single" },
  { icon: <EdgeMark />, bar: "stack", active: true },
  { icon: <FolderMark />, bar: "stack" },
  { icon: <MailMark /> },
  { icon: <TeamsMark />, bar: "single" },
  { icon: <ChromeMark /> },
  { icon: <CodeMark />, bar: "stack" },
  { icon: <EclipseMark /> },
  { icon: <WordMark />, bar: "stack" },
  { icon: <JavaMark />, bar: "single" },
  { icon: <MySqlMark />, bar: "single" },
  { icon: <CmdMark />, bar: "stack" },
  { icon: <PostmanMark />, bar: "single" },
  { icon: <PptMark />, bar: "single" },
  { icon: <PhotosMark />, bar: "single" },
];

const SystemBar = () => (
  <Taskbar>
    <Slot $w={72}>
      <Icon>
        <path d="M-12 -8.800L-2 -10.300V-.7H-12ZM-1 -10.500L12 -12.300V-.7H-1ZM-12 .5H-2V10L-12 8.600ZM-1 .5H12V12L-1 10.200Z" fill="#fff" />
      </Icon>
    </Slot>
    <Slot $w={75}>
      <Icon color="#fff" width={2.800}>
        <circle cx="1.500" cy="-4" r="12" />
        <path d="M-7 5L-16.500 14.500" />
      </Icon>
    </Slot>
    {tasks.map((t, i) => (
      <TaskItem key={i} $bar={t.bar} $active={t.active}>
        <TaskIcon>{t.icon}</TaskIcon>
      </TaskItem>
    ))}
    <Tray>
      <Slot $w={36}>
        <Icon color="#fff" width={1.400}>
          <path d="M-8.500 4L0 -4.500L8.500 4" />
        </Icon>
      </Slot>
      <Slot $w={34}>
        <Icon color="#fff" width={1.400}>
          <path d="M-12 -9L11.500 -12V9L-12 8Z M11.500 -12" />
          <path d="M-6 -1Q-4 -5 1 -4M2 -6V-2.500H-1.500M4 1Q2 5 -4 4M-5 6V2.500H-2" strokeWidth="1.300" />
          <circle cx="6.500" cy="6.500" r="5.500" fill="#ff9b05" stroke="none" />
        </Icon>
      </Slot>
      <Slot $w={37}>
        <Icon color="#fff" width={1.300}>
          <path d="M-5 -5.500H10.500V6.500H-8M12 -2V3" />
          <path d="M-4 -3.500H8.500V4.500H-4Z" fill="#fff" stroke="none" />
          <path d="M-11.500 -5.500H-5.500V-1Q-8.500 2 -11.500 -1ZM-10 -8.500V-6M-7 -8.500V-6M-8.500 1V6.500" fill="#222326" />
        </Icon>
      </Slot>
      <Slot $w={38}>
        <Icon color="#fff" width={1.300}>
          <path d="M-9 9.500A18 18 0 0 1 8.500 -7.500" />
          <path d="M-4.500 9.500A13 13 0 0 1 8.500 -3M0 9.500A9 9 0 0 1 8.500 1.500" stroke="#c9c9c9" />
          <circle cx="7" cy="8" r="2" fill="#fff" stroke="none" />
        </Icon>
      </Slot>
      <Slot $w={32}>
        <Icon color="#fff" width={1.300}>
          <path d="M-10 -3.500H-6.500L-1.500 -8.500V8L-6.500 3.500H-10ZM3 -4L10 4M10 -4L3 4" />
        </Icon>
      </Slot>
      <TrayText $w={60} $ls={-0.5}>
        ENG
        <br />
        IN
      </TrayText>
      <TrayText $w={98} $ls={-0.15}>
        11:12 AM
        <br />
        9/25/2023
      </TrayText>
      <Slot $w={77}>
        <Icon size={50}>
          <path d="M-17 -12H7V6H-8V11L-13 6H-17Z" fill="#fff" />
          <path d="M-12 -6.500H2M-12 -2.500H2M-12 1.500H-3" stroke="#333" strokeWidth="1.200" />
          <circle cx="6" cy="12" r="13.500" fill="#3a3f4a" stroke="#777b84" strokeWidth="1.200" />
          <text x="6" y="18" fill="#fff" fontSize="16" fontWeight="600" textAnchor="middle" fontFamily="Open Sans">
            10
          </text>
        </Icon>
      </Slot>
      <ShowDesktop />
    </Tray>
  </Taskbar>
);

export default function App() {
  return (
    <Screen>
      <GlobalStyle />
      <Tabs />
      <BrowserBar />
      <Middle>
        <PageFrame>
          <Banner>
            <BannerText>Get faster access to your boards by using Miro apps.</BannerText>
            <InstallButton>Install apps</InstallButton>
            <BannerClose>
              <X r={8.5} w={2} />
            </BannerClose>
          </Banner>
          <Board />
        </PageFrame>
        <Rail />
      </Middle>
      <SystemBar />
    </Screen>
  );
}
